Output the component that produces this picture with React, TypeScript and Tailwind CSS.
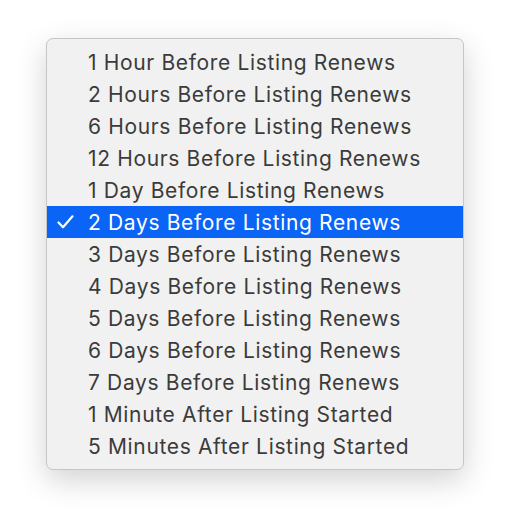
import React from "react";

const items = [
  "1 Hour Before Listing Renews",
  "2 Hours Before Listing Renews",
  "6 Hours Before Listing Renews",
  "12 Hours Before Listing Renews",
  "1 Day Before Listing Renews",
  "2 Days Before Listing Renews",
  "3 Days Before Listing Renews",
  "4 Days Before Listing Renews",
  "5 Days Before Listing Renews",
  "6 Days Before Listing Renews",
  "7 Days Before Listing Renews",
  "1 Minute After Listing Started",
  "5 Minutes After Listing Started",
];

export default function App() {
  return (
    <div className="w-[510px] h-[524px] bg-white pt-[38px] pl-[46px]" style={{ fontFamily: "Inter, 'Noto Sans', sans-serif" }}>
      <div className="w-[418px] h-[432px] rounded-[7px] bg-[#f1f1f1] border border-[#c6c6c6] shadow-[0_10px_30px_rgba(0,0,0,0.18)] py-[7px] overflow-hidden">
        {items.map((t, i) => {
          const sel = i === 5;
          return (
            <div
              key={t}
              className={`flex items-center h-[32px] ${sel ? "bg-[#0a64f5] text-white" : "text-[#3b3b3b]"}`}
            >
              <div className="w-[41px] pl-[10px] flex items-center">
                {sel && (
                  <svg width="17" height="14" viewBox="0 0 17 14">
                    <path d="M1.5 7.5 L6 12.3 L15.5 1.3" fill="none" stroke="white" strokeWidth="2.2" strokeLinecap="round" strokeLinejoin="round" />
                  </svg>
                )}
              </div>
              <span className="text-[21px] leading-none tracking-[0.65px]">{t}</span>
            </div>
          );
        })}
      </div>
    </div>
  );
}
